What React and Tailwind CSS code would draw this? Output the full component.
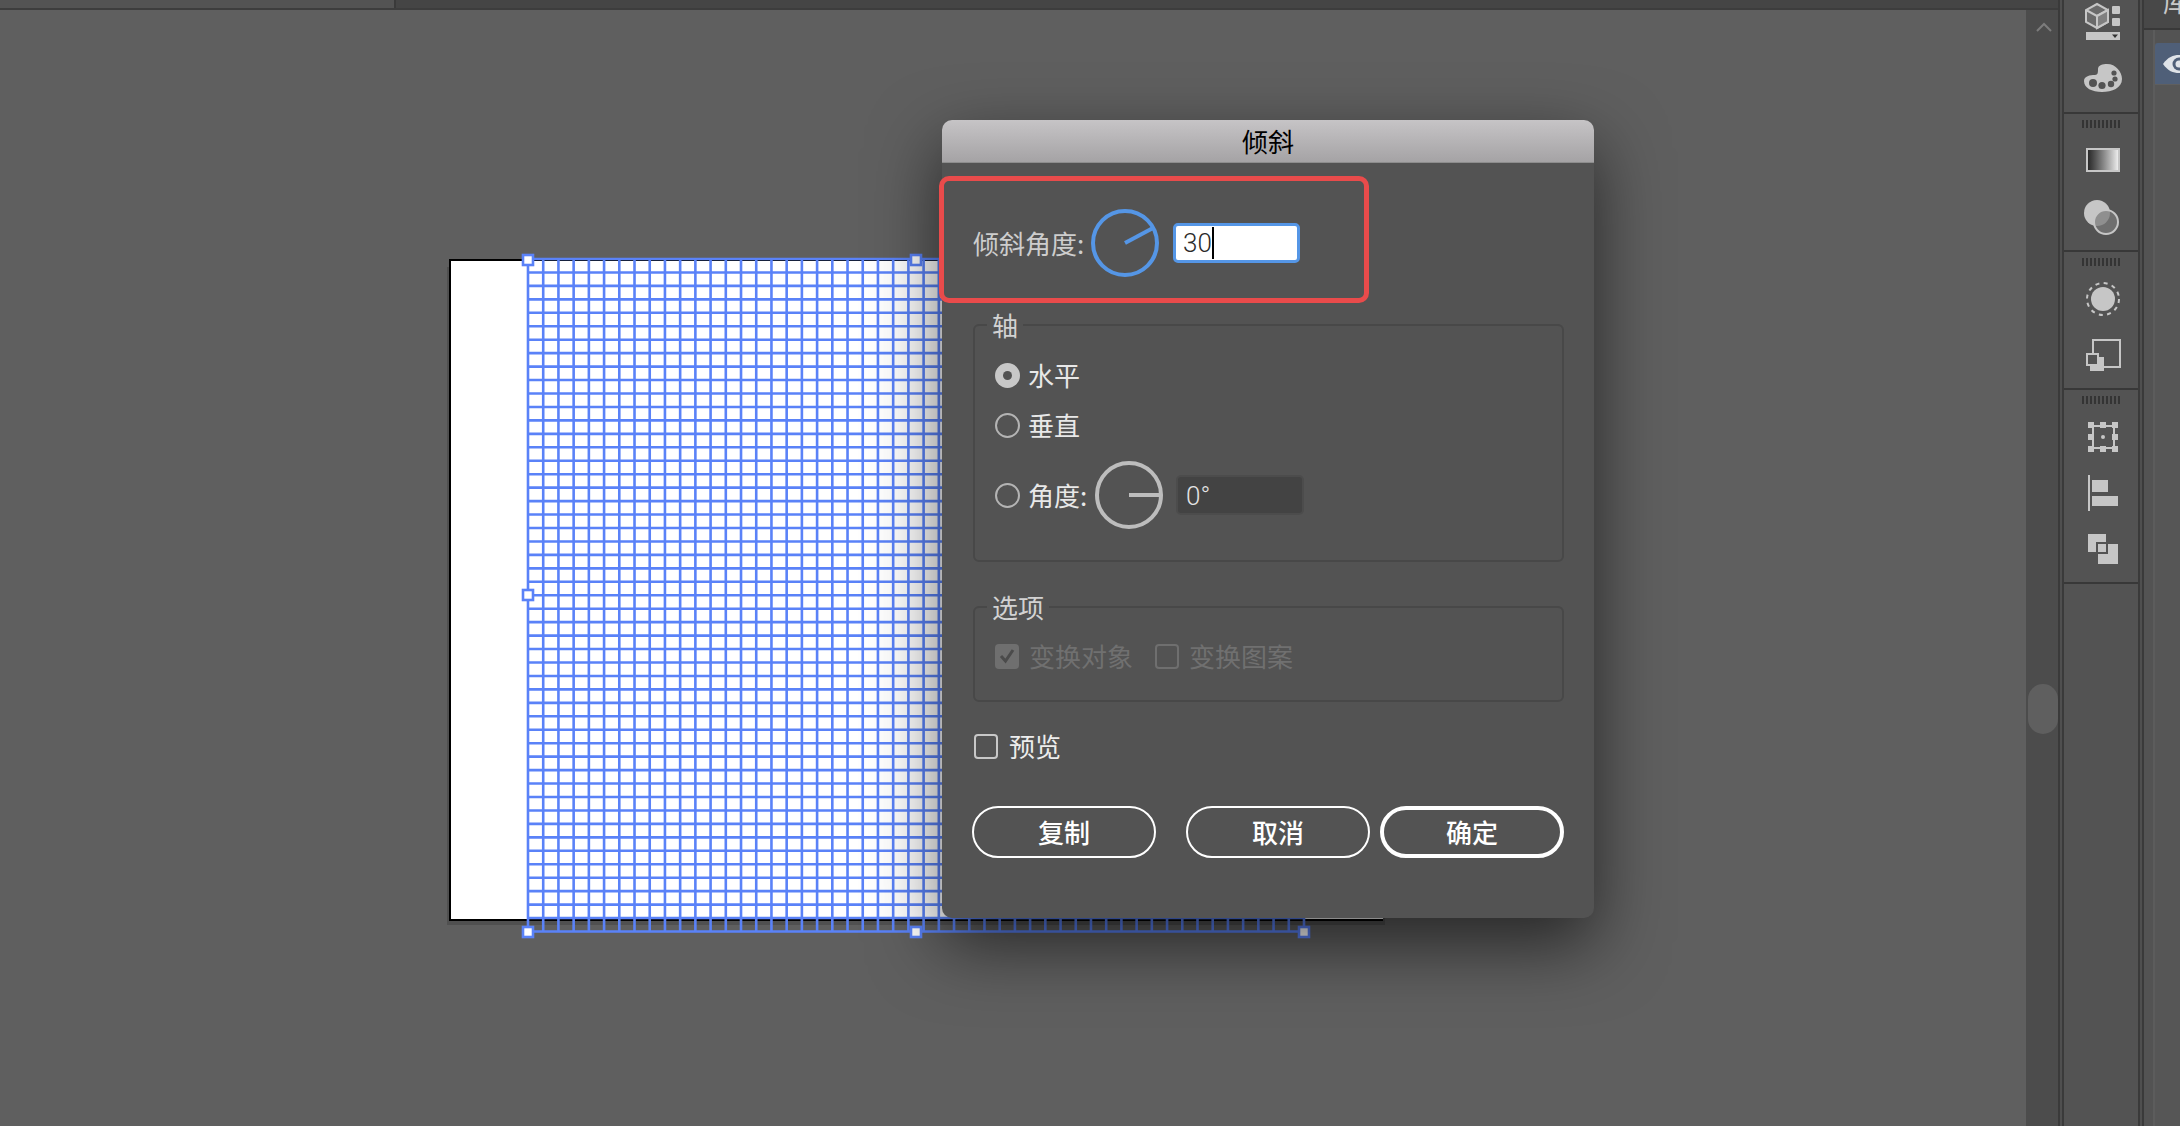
const GRID_COLS = 51;
const GRID_ROWS = 50;
const xs = Array.from({ length: GRID_COLS + 1 }, (_, i) => 528 + (i * 776) / GRID_COLS);
const ys = Array.from({ length: GRID_ROWS + 1 }, (_, i) => 249 + (i * 672.5) / GRID_ROWS);

function Handle({ x, y }) {
  return <rect x={x - 5} y={y - 5} width="10" height="10" fill="#ffffff" stroke="#5a82f8" strokeWidth="2.6" />;
}

function Grid() {
  return (
    <svg className="absolute left-0 top-0" width="1500" height="1000">
      {xs.map((x) => (
        <line key={x} x1={x} y1="249" x2={x} y2="921.5" stroke="#5a82f8" strokeWidth="2.6" />
      ))}
      {ys.map((y) => (
        <line key={y} x1="528" y1={y} x2="1304" y2={y} stroke="#5a82f8" strokeWidth="2.6" />
      ))}
      <Handle x={528} y={250} />
      <Handle x={916} y={250} />
      <Handle x={528} y={585} />
      <Handle x={528} y={922} />
      <Handle x={916} y={922} />
      <Handle x={1304} y={922} />
    </svg>
  );
}

function Dial({ color, x2, y2, x1 = 34, y1 = 34 }) {
  return (
    <svg width="68" height="68" viewBox="0 0 68 68" className="block shrink-0">
      <circle cx="34" cy="34" r="32" fill="none" stroke={color} strokeWidth="4" />
      <line x1={x1} y1={y1} x2={x2} y2={y2} stroke={color} strokeWidth="4" />
    </svg>
  );
}

function Radio({ checked }) {
  return checked ? (
    <span className="flex h-[25px] w-[25px] shrink-0 items-center justify-center rounded-full bg-[#c8c8c8]">
      <span className="h-[9px] w-[9px] rounded-full bg-[#535353]" />
    </span>
  ) : (
    <span className="h-[25px] w-[25px] shrink-0 rounded-full border-2 border-[#b4b4b4]" />
  );
}

function Legend({ children }) {
  return <legend className="-ml-2 px-[5px] text-[26px] leading-[26px] text-[#d2d2d2]">{children}</legend>;
}

function PillButton({ children, className }) {
  return (
    <button className={`flex h-[52px] w-[184px] items-center justify-center rounded-full text-[26px] font-medium leading-none text-white ${className}`}>
      {children}
    </button>
  );
}

function Dialog() {
  return (
    <div className="absolute left-[942px] top-[110px] w-[652px] rounded-[10px] bg-[#535353] shadow-[0_26px_70px_rgba(0,0,0,0.6)]">
      <div className="flex h-[43px] items-center justify-center rounded-t-[10px] border-b border-[#8d8d8d] bg-gradient-to-b from-[#c6c4c6] to-[#a5a3a5] text-[26px] font-normal leading-none text-[#000000]">
        倾斜
      </div>
      <div className="pb-[60px] pl-[31px] pr-[30px] pt-[46px]">
        <div className="flex h-[68px] items-center">
          <span className="w-[118px] shrink-0 text-[26px] leading-none text-[#cdcdcd]">倾斜角度:</span>
          <Dial color="#5596e6" x2={62} y2={19} />
          <div className="relative ml-[14px] h-[40px] w-[127px] rounded-[5px] border-[3px] border-[#5596e6] bg-white pl-[7px] font-['Roboto',sans-serif] text-[26px] font-light leading-[34px] text-[#2a2a2a]">
            30
            <span className="absolute left-[36px] top-[1px] h-[32px] w-[2px] bg-black" />
          </div>
        </div>

        <fieldset className="mt-[35px] rounded-[6px] border-2 border-[#484848] pb-[31px] pl-5">
          <Legend>轴</Legend>
          <div className="flex flex-col pt-[22px] text-[26px] leading-none text-[#e8e8e8]">
            <div className="flex h-[30px] items-center gap-[8px]">
              <Radio checked />
              水平
            </div>
            <div className="mt-[20px] flex h-[30px] items-center gap-[8px]">
              <Radio />
              垂直
            </div>
            <div className="mt-[21px] flex h-[68px] items-center">
              <Radio />
              <span className="ml-[8px] w-[67px]">角度:</span>
              <Dial color="#bdbdbd" x1={34} y1={34} x2={66} y2={34} />
              <div className="ml-[13px] h-[40px] w-[128px] rounded-[5px] border-2 border-[#4c4c4c] bg-[#434343] pl-[8px] font-['Roboto',sans-serif] text-[26px] font-light leading-[38px] text-[#e4e4e4]">
                0°
              </div>
            </div>
          </div>
        </fieldset>

        <fieldset className="mt-[32px] rounded-[6px] border-2 border-[#484848] pb-[29px] pl-5">
          <Legend>选项</Legend>
          <div className="mt-[21px] flex h-[30px] items-center text-[26px] leading-none text-[#707070]">
            <span className="flex h-[25px] w-[24px] shrink-0 items-center justify-center rounded-[4px] bg-[#6f6f6f]">
              <svg width="16" height="16" viewBox="0 0 16 16">
                <path d="M2 8 L6.5 13 L14 2" fill="none" stroke="#4b4b4b" strokeWidth="3" />
              </svg>
            </span>
            <span className="ml-[10px]">变换对象</span>
            <span className="ml-[22px] h-[25px] w-[24px] shrink-0 rounded-[4px] border-2 border-[#6f6f6f]" />
            <span className="ml-[10px]">变换图案</span>
          </div>
        </fieldset>

        <div className="mt-[29px] flex h-[30px] items-center text-[26px] leading-none text-[#ededed]">
          <span className="ml-px h-[25px] w-[24px] shrink-0 rounded-[4px] border-2 border-[#c8c8c8]" />
          <span className="ml-[11px]">预览</span>
        </div>

        <div className="mt-[45px] flex">
          <PillButton className="-ml-px border-2 border-white">复制</PillButton>
          <PillButton className="ml-[30px] border-2 border-white">取消</PillButton>
          <PillButton className="ml-[10px] border-4 border-white">确定</PillButton>
        </div>
      </div>

      <div className="absolute left-[-3px] top-[56px] h-[127px] w-[430px] rounded-[10px] border-[5px] border-[#e94b4b]" />
    </div>
  );
}

function Grip() {
  return (
    <div className="ml-[18px] mt-[6px] flex h-2 gap-[2px]">
      {[0, 1, 2, 3, 4, 5, 6, 7, 8, 9].map((i) => (
        <span key={i} className="h-2 w-[2px] bg-[#343434]" />
      ))}
    </div>
  );
}

const C = "#c6c6c6";
const BG = "#535353";

function Tools() {
  return (
    <div className="flex w-[74px] shrink-0 flex-col bg-[#535353]">
      <div className="h-[112px] shrink-0">
        <svg width="40" height="44" className="ml-5 block">
          <path d="M13 4 L24 10 V22 L13 28 L2 22 V10 Z" fill="#6a6a6a" stroke={C} strokeWidth="2" />
          <path d="M2 10 L13 16 L24 10 M13 16 V28" fill="none" stroke={C} strokeWidth="2" />
          <path d="M13 16 L24 10 V22 L13 28 Z" fill="#808080" stroke={C} strokeWidth="2" />
          <rect x="28" y="6" width="8" height="8" rx="1" fill={C} />
          <rect x="28" y="18" width="8" height="8" rx="1" fill={C} />
          <rect x="2" y="32" width="34" height="8" fill={C} />
          <path d="M28 34.5 H34 L31 38 Z" fill="#333" />
        </svg>
        <svg width="40" height="28" viewBox="0 0 40 28" className="ml-5 mt-[20px] block">
          <path d="M0 17 C0 12 6 11 11 11 C14 11 14 8 14 5 C14 1 19 0 23 0 C32 0 38 8 38 15 C38 24 28 28 18 28 C8 28 0 24 0 17 Z" fill={C} />
          <circle cx="9" cy="19" r="4" fill={BG} />
          <circle cx="18" cy="21.5" r="3.6" fill={BG} />
          <circle cx="27" cy="20" r="3.2" fill={BG} />
          <circle cx="31" cy="15" r="2.6" fill={BG} />
          <circle cx="30" cy="9" r="2.6" fill={BG} />
        </svg>
      </div>
      <div className="h-[2px] shrink-0 bg-[#383838]" />

      <div className="h-[136px] shrink-0">
        <Grip />
        <div className="ml-[22px] mt-[20px] h-[24px] w-[34px] border-2 border-[#c6c6c6] bg-gradient-to-r from-[#2a2a2a] to-[#ececec]" />
        <svg width="40" height="36" viewBox="0 0 40 36" className="ml-5 mt-[28px] block">
          <defs>
            <clipPath id="overlap">
              <circle cx="13" cy="13" r="13" />
            </clipPath>
          </defs>
          <circle cx="13" cy="13" r="13" fill={C} />
          <circle cx="22" cy="22" r="12" fill="#6f6f6f" />
          <circle cx="22" cy="22" r="12" fill="#8f8f8f" clipPath="url(#overlap)" />
          <circle cx="22" cy="22" r="12" fill="none" stroke={C} strokeWidth="2" />
        </svg>
      </div>
      <div className="h-[2px] shrink-0 bg-[#383838]" />

      <div className="h-[136px] shrink-0">
        <Grip />
        <svg width="40" height="36" viewBox="0 0 40 36" className="ml-5 mt-[15px] block">
          <circle cx="19" cy="18" r="12" fill={C} />
          <circle cx="19" cy="18" r="16" fill="none" stroke={C} strokeWidth="2" strokeDasharray="4 4.4" />
        </svg>
        <svg width="40" height="33" viewBox="0 0 40 33" className="ml-5 mt-[22px] block">
          <rect x="9" y="1" width="27" height="27" fill="none" stroke={C} strokeWidth="2" />
          <rect x="6" y="18" width="14" height="14" fill={C} />
          <rect x="3" y="15" width="11" height="11" fill={BG} stroke={C} strokeWidth="2" />
        </svg>
      </div>
      <div className="h-[2px] shrink-0 bg-[#383838]" />

      <div className="h-[192px] shrink-0">
        <Grip />
        <svg width="40" height="30" viewBox="0 0 40 30" className="ml-5 mt-[18px] block">
          <rect x="9" y="4" width="21" height="22" fill="none" stroke={C} strokeWidth="2" />
          <rect x="4" y="0" width="6" height="6" fill={C} />
          <rect x="16" y="0" width="6" height="6" fill={C} />
          <rect x="28" y="0" width="6" height="6" fill={C} />
          <rect x="4" y="12" width="6" height="6" fill={C} />
          <rect x="28" y="12" width="6" height="6" fill={C} />
          <rect x="4" y="24" width="6" height="6" fill={C} />
          <rect x="16" y="24" width="6" height="6" fill={C} />
          <rect x="28" y="24" width="6" height="6" fill={C} />
          <circle cx="19" cy="15" r="2" fill={C} />
        </svg>
        <svg width="40" height="36" viewBox="0 0 40 36" className="ml-5 mt-[23px] block">
          <rect x="4" y="0" width="2" height="36" fill={C} />
          <rect x="8" y="5" width="16" height="12" fill={C} />
          <rect x="8" y="21" width="26" height="10" fill={C} />
        </svg>
        <svg width="40" height="30" viewBox="0 0 40 30" className="ml-5 mt-[23px] block">
          <rect x="4" y="0" width="18" height="18" fill={C} />
          <rect x="14" y="10" width="20" height="20" fill={C} />
          <rect x="12" y="8" width="12" height="12" fill={BG} />
          <rect x="14" y="10" width="8" height="8" fill={C} />
        </svg>
      </div>
      <div className="h-[2px] shrink-0 bg-[#383838]" />
    </div>
  );
}

function RightPanel() {
  return (
    <div className="flex min-w-0 flex-1 flex-col overflow-hidden">
      <div className="h-[28px] shrink-0 overflow-hidden bg-[#484848] pl-[19px]">
        <div className="-mt-[12px] w-[40px] text-[26px] leading-[26px] text-[#c8c8c8]">库</div>
      </div>
      <div className="h-[2px] shrink-0 bg-[#383838]" />
      <div className="flex flex-1 bg-[#535353] pl-[9px]">
        <div className="h-full w-[2px] shrink-0 bg-[#5c5c5c]" />
        <div className="mt-[13px] flex-1 bg-[#565656]">
          <div className="flex h-[42px] items-center rounded-tl-[3px] border-b border-[#5f5f5f] bg-[#4f5f78] pl-[7px]">
            <svg width="34" height="20" viewBox="0 0 34 20" className="block shrink-0">
              <path d="M1 10 C6 3 11 1 17 1 C23 1 28 3 33 10 C28 17 23 19 17 19 C11 19 6 17 1 10 Z" fill="#dfe3e8" />
              <circle cx="17" cy="10" r="6.5" fill="#4f5f78" />
              <circle cx="17" cy="10" r="3.5" fill="#dfe3e8" />
            </svg>
          </div>
        </div>
      </div>
    </div>
  );
}

export default function App() {
  return (
    <div className="flex h-[1126px] w-[2180px] overflow-hidden bg-[#5f5f5f] font-['Noto_Sans_CJK_SC','Liberation_Sans',sans-serif]">
      <div className="flex w-[2058px] shrink-0 flex-col">
        <div className="flex h-[8px] shrink-0">
          <div className="w-[394px] bg-[#535353]" />
          <div className="w-[2px] bg-[#3a3a3a]" />
          <div className="flex-1 bg-[#454545]" />
        </div>
        <div className="h-[2px] shrink-0 bg-[#3d3d3d]" />
        <div className="flex flex-1">
          <div className="relative flex-1 overflow-hidden bg-[#5f5f5f]">
            <div className="absolute left-[447px] top-[257px] h-[658px] w-[938px] bg-[#505050]" />
            <div className="absolute left-[449px] top-[249px] h-[662px] w-[934px] border-b-2 border-l-2 border-t-2 border-black bg-white" />
            <Grid />
            <Dialog />
          </div>
          <div className="flex w-[32px] shrink-0 flex-col bg-[#4c4c4c]">
            <svg width="16" height="10" viewBox="0 0 16 10" className="ml-[10px] mt-[12px] block">
              <path d="M1 9 L8 2 L15 9" fill="none" stroke="#7c7c7c" strokeWidth="2" />
            </svg>
            <div className="ml-[2px] mt-[652px] h-[50px] w-[30px] rounded-full bg-[#5f5f5f]" />
          </div>
        </div>
      </div>
      <div className="w-[2px] shrink-0 bg-[#3a3a3a]" />
      <div className="w-[2px] shrink-0 bg-[#4f4f4f]" />
      <div className="w-[2px] shrink-0 bg-[#3a3a3a]" />
      <Tools />
      <div className="w-[2px] shrink-0 bg-[#3a3a3a]" />
      <div className="w-[2px] shrink-0 bg-[#4f4f4f]" />
      <div className="w-[2px] shrink-0 bg-[#3a3a3a]" />
      <RightPanel />
    </div>
  );
}
